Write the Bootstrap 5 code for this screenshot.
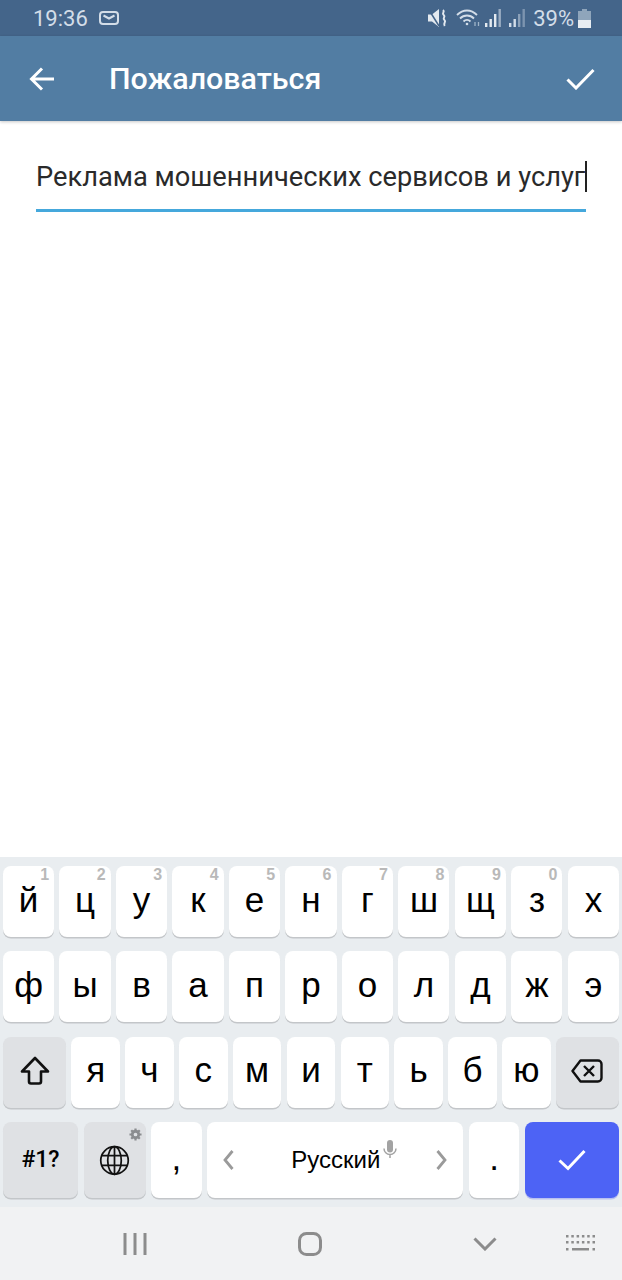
<!DOCTYPE html>
<html lang="ru">
<head>
  <meta charset="UTF-8" />
  <title>Пожаловаться</title>
  <meta name="viewport" content="width=device-width, initial-scale=1.0" />
  <link href="https://cdn.jsdelivr.net/npm/bootstrap@5.3.2/dist/css/bootstrap.min.css" rel="stylesheet">
  <style>
    body {
      font-family: "Roboto", "Liberation Sans", sans-serif;
      height: 1280px;
      overflow: hidden;
      background: #fff;
    }

    .status-bar {
      height: 36px;
      background: #44658a;
      color: #d3dde8;
      font-size: 22px;
      padding: 0 31px 0 33px;
    }

    .status-bar svg { display: block; }
    .mail-icon { margin-left: 11px; }

    .app-bar {
      height: 85px;
      background: #527da3;
      color: #fff;
      box-shadow: 0 1px 3px rgba(0, 0, 0, .22);
      padding: 0 27px 0 29px;
    }

    .app-title {
      font-size: 30.4px;
      font-weight: 500;
      margin-left: 54px;
    }

    .report-field {
      margin: 37px 36px 0;
      height: 54px;
      border-bottom: 3px solid #45a8dc;
      font-size: 27.25px;
      line-height: 38px;
      color: #2a2a2a;
      white-space: nowrap;
    }

    .caret-mark {
      display: inline-block;
      width: 2px;
      height: 31px;
      background: #222;
      vertical-align: -6px;
    }

    .keyboard {
      height: 350px;
      background: #e9edf0;
      padding: 9px 3px;
      gap: 14.4px;
    }

    .key-row { gap: 5.4px; height: 71px; }
    .key-row.last-row { height: 76px; gap: 5.6px; }

    .kb-key {
      position: relative;
      flex: 1 1 0;
      min-width: 0;
      background: #fff;
      border-radius: 8px;
      box-shadow: 0 1.5px 0 #c3c6c9;
      color: #000;
      font-family: "Liberation Sans", sans-serif;
      font-size: 35px;
      padding-bottom: 3px;
    }

    .kb-key.func { background: #dfe1e4; }
    .kb-key.shift-key { flex: 0 0 63px; }
    .kb-key.sym-key { flex: 0 0 75px; font-family: "Roboto", sans-serif; font-size: 23px; font-weight: 500; padding: 0; }
    .kb-key.lang-key { flex: 0 0 62px; padding: 0; }
    .kb-key.punct-key { flex: 0 0 50.5px; }
    .kb-key.space-key { flex: 1 1 0; font-size: 24px; padding: 0; justify-content: space-between; }
    .kb-key.enter-key { flex: 0 0 94px; background: #4d63f5; box-shadow: 0 1.5px 0 #b9c1f0; padding: 0; }

    .key-hint {
      position: absolute;
      top: 0;
      right: 5px;
      font-size: 16px;
      line-height: 18px;
      font-weight: 700;
      color: #b9b9b9;
    }

    .gear-hint { position: absolute; top: 6px; right: 4px; }
    .mic-hint { position: absolute; top: 18px; left: 176px; }
    .space-label { position: absolute; left: 84px; top: 20px; line-height: 36px; }

    .nav-strip {
      height: 73px;
      background: #f1f2f3;
      padding-left: 123px;
    }

    .nav-gap { margin-left: 151px; }
    .nav-gap-short { margin-left: 69px; }
  </style>
</head>
<body class="d-flex flex-column">

  <div class="status-bar d-flex align-items-center flex-shrink-0">
    <span>19:36</span>
    <svg class="mail-icon" width="20" height="14" viewBox="0 0 20 14" fill="none" stroke="#d3dde8" stroke-width="2">
      <rect x="1" y="1" width="18" height="12" rx="3"/>
      <path d="M4.500 4.500l5.500 3 5.500-3"/>
    </svg>
    <div class="ms-auto d-flex align-items-center">
      <svg width="20" height="18" viewBox="0 0 20 18" fill="#e4eaf0">
        <path d="M0 5.500h4L11 0v18l-7-5.500H0z"/>
        <path d="M1 1l10 16" stroke="#44658a" stroke-width="1.500"/>
        <path d="M15 1c2.500 2-1.800 3 .7 5s-1.800 3 .7 5-1.800 3 .3 6" fill="none" stroke="#e4eaf0" stroke-width="2"/>
      </svg>
      <svg class="ms-2" width="25" height="18" viewBox="0 0 25 18" fill="none" stroke="#d3dde8" stroke-width="1.800">
        <path d="M1 6c6-6 14-6 20 0"/>
        <path d="M4 9.500c4-4 10-4 14 0"/>
        <path d="M7.500 12.500c2-2 5-2 7 0"/>
        <circle cx="11" cy="15" r="1.300" fill="#d3dde8" stroke="none"/>
        <path d="M19 17v-4M22.500 13v4" stroke="#9fb4c9" stroke-width="1.300"/>
      </svg>
      <svg class="ms-1" width="16" height="20" viewBox="0 0 16 20" fill="#e4eaf0">
        <rect x="0" y="15" width="2.400" height="4"/><rect x="4.500" y="11" width="2.400" height="8"/>
        <rect x="9" y="6" width="2.400" height="13"/><rect x="13.500" y="1" width="2.400" height="18" opacity=".55"/>
      </svg>
      <svg class="ms-2" width="16" height="20" viewBox="0 0 16 20" fill="#d3dde8">
        <rect x="0" y="15" width="2.400" height="4"/><rect x="4.500" y="11" width="2.400" height="8"/>
        <rect x="9" y="6" width="2.400" height="13" opacity=".5"/><rect x="13.500" y="1" width="2.400" height="18" opacity=".4"/>
      </svg>
      <span class="ms-2">39%</span>
      <svg class="ms-1" width="13" height="19" viewBox="0 0 13 19">
        <path d="M4 0h5v2h4v17H0V2h4z" fill="#8fa5bb"/>
        <rect x="0" y="11" width="13" height="8" fill="#e8edf2"/>
      </svg>
    </div>
  </div>

  <div class="app-bar d-flex align-items-center flex-shrink-0">
    <svg width="26" height="24" viewBox="0 0 26 24" fill="none" stroke="#fff" stroke-width="3">
      <path d="M25 12H3M13 1.500L2.500 12 13 22.500"/>
    </svg>
    <span class="app-title">Пожаловаться</span>
    <svg class="ms-auto" width="29" height="22" viewBox="0 0 29 22" fill="none" stroke="#fff" stroke-width="3">
      <path d="M1.500 11.500l8.500 8.500L27.500 2"/>
    </svg>
  </div>

  <div class="flex-grow-1">
    <div class="report-field">Реклама мошеннических сервисов и услуг<span class="caret-mark"></span></div>
  </div>

  <div class="keyboard d-flex flex-column flex-shrink-0">
    <div class="key-row d-flex">
      <div class="kb-key d-flex align-items-center justify-content-center">й<span class="key-hint">1</span></div>
      <div class="kb-key d-flex align-items-center justify-content-center">ц<span class="key-hint">2</span></div>
      <div class="kb-key d-flex align-items-center justify-content-center">у<span class="key-hint">3</span></div>
      <div class="kb-key d-flex align-items-center justify-content-center">к<span class="key-hint">4</span></div>
      <div class="kb-key d-flex align-items-center justify-content-center">е<span class="key-hint">5</span></div>
      <div class="kb-key d-flex align-items-center justify-content-center">н<span class="key-hint">6</span></div>
      <div class="kb-key d-flex align-items-center justify-content-center">г<span class="key-hint">7</span></div>
      <div class="kb-key d-flex align-items-center justify-content-center">ш<span class="key-hint">8</span></div>
      <div class="kb-key d-flex align-items-center justify-content-center">щ<span class="key-hint">9</span></div>
      <div class="kb-key d-flex align-items-center justify-content-center">з<span class="key-hint">0</span></div>
      <div class="kb-key d-flex align-items-center justify-content-center">х</div>
    </div>
    <div class="key-row d-flex">
      <div class="kb-key d-flex align-items-center justify-content-center">ф</div>
      <div class="kb-key d-flex align-items-center justify-content-center">ы</div>
      <div class="kb-key d-flex align-items-center justify-content-center">в</div>
      <div class="kb-key d-flex align-items-center justify-content-center">а</div>
      <div class="kb-key d-flex align-items-center justify-content-center">п</div>
      <div class="kb-key d-flex align-items-center justify-content-center">р</div>
      <div class="kb-key d-flex align-items-center justify-content-center">о</div>
      <div class="kb-key d-flex align-items-center justify-content-center">л</div>
      <div class="kb-key d-flex align-items-center justify-content-center">д</div>
      <div class="kb-key d-flex align-items-center justify-content-center">ж</div>
      <div class="kb-key d-flex align-items-center justify-content-center">э</div>
    </div>
    <div class="key-row d-flex">
      <div class="kb-key func shift-key d-flex align-items-center justify-content-center">
        <svg width="30" height="30" viewBox="0 0 30 30" fill="none" stroke="#111" stroke-width="2.600" stroke-linejoin="round">
          <path d="M15 2L2 15.500h7v10a2 2 0 0 0 2 2h8a2 2 0 0 0 2-2v-10h7z"/>
        </svg>
      </div>
      <div class="kb-key d-flex align-items-center justify-content-center">я</div>
      <div class="kb-key d-flex align-items-center justify-content-center">ч</div>
      <div class="kb-key d-flex align-items-center justify-content-center">с</div>
      <div class="kb-key d-flex align-items-center justify-content-center">м</div>
      <div class="kb-key d-flex align-items-center justify-content-center">и</div>
      <div class="kb-key d-flex align-items-center justify-content-center">т</div>
      <div class="kb-key d-flex align-items-center justify-content-center">ь</div>
      <div class="kb-key d-flex align-items-center justify-content-center">б</div>
      <div class="kb-key d-flex align-items-center justify-content-center">ю</div>
      <div class="kb-key func shift-key d-flex align-items-center justify-content-center">
        <svg width="32" height="24" viewBox="0 0 32 24" fill="none" stroke="#111" stroke-width="2.400" stroke-linejoin="round">
          <path d="M9.500 1.500H27a3.500 3.500 0 0 1 3.500 3.500v14a3.500 3.500 0 0 1-3.500 3.500H9.500L1.500 12z"/>
          <path d="M13 7l10 10M23 7L13 17"/>
        </svg>
      </div>
    </div>
    <div class="key-row last-row d-flex">
      <div class="kb-key func sym-key d-flex align-items-center justify-content-center">#1?</div>
      <div class="kb-key func lang-key d-flex align-items-center justify-content-center">
        <svg width="31" height="31" viewBox="0 0 32 32" fill="none" stroke="#111" stroke-width="1.800">
          <circle cx="16" cy="16" r="14.200"/>
          <ellipse cx="16" cy="16" rx="7" ry="14.200"/>
          <path d="M16 2v28M2.500 11h27M2.500 21h27"/>
        </svg>
        <svg class="gear-hint" width="13" height="13" viewBox="0 0 14 14" fill="none" stroke="#8b8d90">
          <circle cx="7" cy="7" r="3.500" stroke-width="3"/>
          <path d="M7 .5v3M7 10.500v3M.5 7h3M10.500 7h3M2.400 2.400l2 2M9.600 9.600l2 2M11.600 2.400l-2 2M4.400 9.600l-2 2" stroke-width="2.400"/>
        </svg>
      </div>
      <div class="kb-key punct-key d-flex align-items-center justify-content-center">,</div>
      <div class="kb-key space-key d-flex align-items-center px-3">
        <svg width="11" height="20" viewBox="0 0 11 20" fill="none" stroke="#9a9a9a" stroke-width="2.800"><path d="M9.500 1L2 10l7.500 9"/></svg>
        <span class="space-label">Русский</span>
        <svg class="mic-hint" width="14" height="22" viewBox="0 0 14 22" fill="none" stroke="#a3a3a3" stroke-width="1.500">
          <rect x="4" y="0" width="6" height="12.500" rx="3" fill="#a3a3a3" stroke="none"/>
          <path d="M1 8.500a6 6 0 0 0 12 0M7 14.500V18"/>
        </svg>
        <svg width="11" height="20" viewBox="0 0 11 20" fill="none" stroke="#9a9a9a" stroke-width="2.800"><path d="M1.500 1L9 10l-7.500 9"/></svg>
      </div>
      <div class="kb-key punct-key d-flex align-items-center justify-content-center">.</div>
      <div class="kb-key enter-key d-flex align-items-center justify-content-center">
        <svg width="28" height="22" viewBox="0 0 28 22" fill="none" stroke="#fff" stroke-width="3">
          <path d="M1.500 11.500l8.500 8L26.500 2"/>
        </svg>
      </div>
    </div>
  </div>

  <div class="nav-strip d-flex align-items-center flex-shrink-0">
    <svg width="24" height="24" viewBox="0 0 24 24" fill="none" stroke="#8c8c8c" stroke-width="3">
      <path d="M2 1v22M12 1v22M22 1v22"/>
    </svg>
    <svg class="nav-gap" width="24" height="24" viewBox="0 0 24 24" fill="none" stroke="#8c8c8c" stroke-width="3">
      <rect x="1.500" y="1.500" width="21" height="21" rx="7"/>
    </svg>
    <svg class="nav-gap" width="24" height="14" viewBox="0 0 24 14" fill="none" stroke="#8c8c8c" stroke-width="3">
      <path d="M1.500 1.500L12 12 22.500 1.500"/>
    </svg>
    <svg class="nav-gap-short" width="29" height="17" viewBox="0 0 29 17" fill="#8c8c8c">
      <rect x="0" y="0" width="2.500" height="2.500"/><rect x="5.300" y="0" width="2.500" height="2.500"/><rect x="10.600" y="0" width="2.500" height="2.500"/><rect x="15.900" y="0" width="2.500" height="2.500"/><rect x="21.200" y="0" width="2.500" height="2.500"/><rect x="26.500" y="0" width="2.500" height="2.500"/>
      <rect x="0" y="6" width="2.500" height="2.500"/><rect x="5.300" y="6" width="2.500" height="2.500"/><rect x="10.600" y="6" width="2.500" height="2.500"/><rect x="15.900" y="6" width="2.500" height="2.500"/><rect x="21.200" y="6" width="2.500" height="2.500"/><rect x="26.500" y="6" width="2.500" height="2.500"/>
      <rect x="0" y="13" width="2.500" height="2.500"/><rect x="6" y="13" width="17" height="2.500"/><rect x="26.500" y="13" width="2.500" height="2.500"/>
    </svg>
  </div>

  <script src="https://cdn.jsdelivr.net/npm/bootstrap@5.3.2/dist/js/bootstrap.bundle.min.js"></script>
</body>
</html>
